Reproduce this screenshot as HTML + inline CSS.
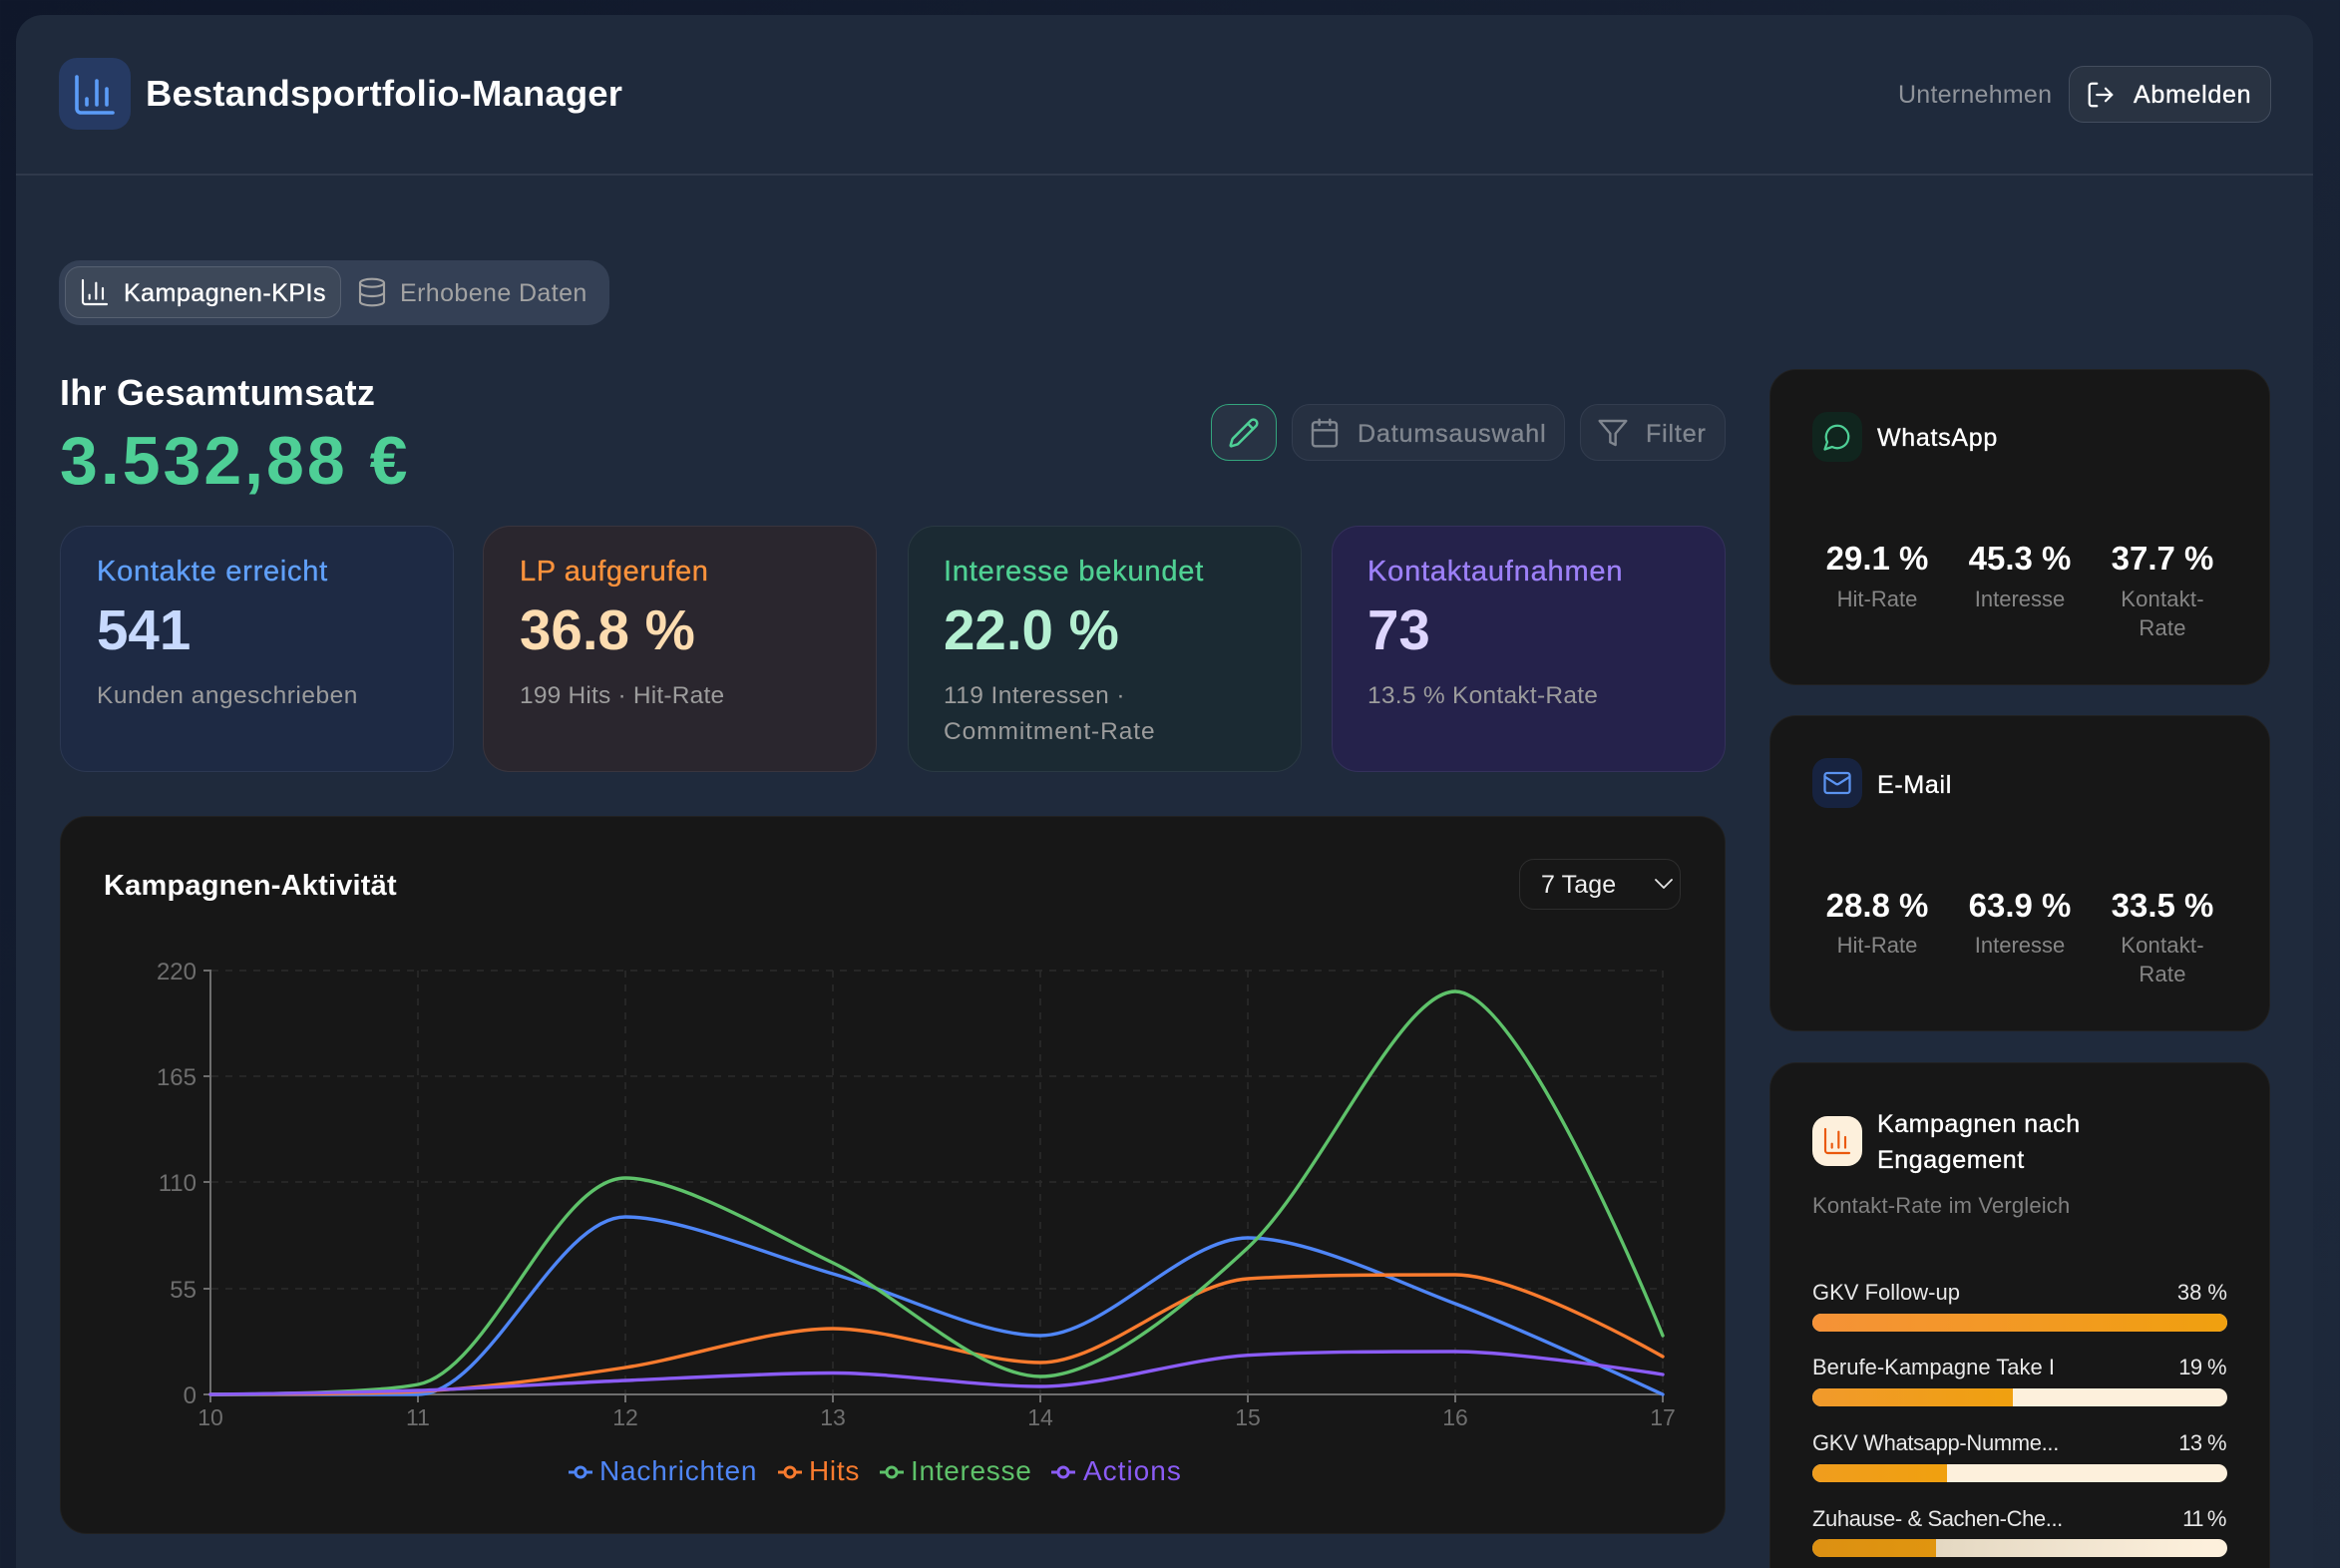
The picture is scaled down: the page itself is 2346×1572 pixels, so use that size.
<!DOCTYPE html>
<html lang="de">
<head>
<meta charset="utf-8">
<title>Bestandsportfolio-Manager</title>
<style>
html,body{margin:0;padding:0;width:2346px;height:1572px;overflow:hidden}
body{position:relative;background:linear-gradient(135deg,#0f172a 0%,#1e293b 100%);font-family:"Liberation Sans",sans-serif;color:#fff}
.a,.t{position:absolute;box-sizing:border-box}
.t{white-space:nowrap;line-height:1}
.m{-webkit-text-stroke:.35px currentColor}
.panel{left:16px;top:15px;width:2303px;height:1600px;background:#1f2a3c;border-radius:27px}
.hr{left:16px;top:174px;width:2303px;height:2px;background:#2f394b}
.kpi{top:527px;width:395px;height:247px;border-radius:27px;border:1.5px solid}
.kl{top:559px;font-size:29px}
.kv{top:604px;font-size:56.5px;font-weight:700}
.ks{font-size:24.5px;color:#9c9c9c;letter-spacing:.42px}
.dark{background:#171717;border:1.5px solid #212121;border-radius:27px}
.btn{top:405px;height:57px;border-radius:18px;background:#263041;border:1.5px solid #333d4f}
.bt{top:423px;font-size:25px;color:#80868f}
.val{font-size:33px;font-weight:700;text-align:center;width:140px}
.lab{font-size:22px;color:#868686;text-align:center;width:140px;line-height:29px;white-space:normal}
.bl{font-size:22px;color:#e8e8e8}
.pc{font-size:22px;color:#e8e8e8;right:113px}
.track{left:1817px;width:416px;height:18px;border-radius:9px;background:#fdf0dc;overflow:hidden}
.fill{position:absolute;left:0;top:0;height:18px;background:linear-gradient(90deg,#f59238,#f0a00f)}
svg.i{position:absolute;fill:none;stroke-linecap:round;stroke-linejoin:round}
</style>
</head>
<body>
<div class="a panel"></div>
<div class="a hr"></div>

<!-- header -->
<div class="a" style="left:59px;top:58px;width:72px;height:72px;border-radius:18px;background:#263a63"></div>
<svg class="i" style="left:71px;top:71px" width="48" height="48" viewBox="0 0 24 24" stroke="#5b9cf8" stroke-width="1.8"><path d="M3 3v16a2 2 0 0 0 2 2h16"/><path d="M18 17V9"/><path d="M13 17V5"/><path d="M8 17v-3"/></svg>
<div class="t" style="left:146px;top:76px;font-size:36.5px;font-weight:700;letter-spacing:.14px">Bestandsportfolio-Manager</div>
<div class="t" style="left:1903px;top:83px;font-size:25px;color:#8f939a;letter-spacing:.25px">Unternehmen</div>
<div class="a" style="left:2074px;top:66px;width:203px;height:57px;border-radius:15px;background:#293342;border:1.5px solid #434d5e"></div>
<svg class="i" style="left:2091px;top:80px" width="30" height="30" viewBox="0 0 24 24" stroke="#fff" stroke-width="1.8"><path d="M9 21H5a2 2 0 0 1-2-2V5a2 2 0 0 1 2-2h4"/><path d="m16 17 5-5-5-5"/><path d="M21 12H9"/></svg>
<div class="t m" style="left:2139px;top:83px;font-size:25px;letter-spacing:.7px">Abmelden</div>

<!-- tabs -->
<div class="a" style="left:59px;top:261px;width:552px;height:65px;border-radius:21px;background:#344055"></div>
<div class="a" style="left:65px;top:267px;width:277px;height:52px;border-radius:15px;background:#3d4859;border:1.5px solid #566071"></div>
<svg class="i" style="left:79px;top:277px" width="32" height="32" viewBox="0 0 24 24" stroke="#fff" stroke-width="1.6"><path d="M3 3v16a2 2 0 0 0 2 2h16"/><path d="M18 17V9"/><path d="M13 17V5"/><path d="M8 17v-3"/></svg>
<div class="t m" style="left:124px;top:282px;font-size:25px;letter-spacing:.5px">Kampagnen-KPIs</div>
<svg class="i" style="left:357px;top:277px" width="32" height="32" viewBox="0 0 24 24" stroke="#a3a3a3" stroke-width="1.6"><ellipse cx="12" cy="5" rx="9" ry="3"/><path d="M3 5V19A9 3 0 0 0 21 19V5"/><path d="M3 12A9 3 0 0 0 21 12"/></svg>
<div class="t" style="left:401px;top:282px;font-size:25px;color:#a3a3a3;letter-spacing:.4px">Erhobene Daten</div>

<!-- revenue -->
<div class="t" style="left:60px;top:376px;font-size:36px;font-weight:700;letter-spacing:.25px">Ihr Gesamtumsatz</div>
<div class="t" style="left:60px;top:428px;font-size:68px;font-weight:700;letter-spacing:3px;color:#4ecf96">3.532,88 €</div>

<!-- action buttons -->
<div class="a btn" style="left:1214px;width:66px;background:#283344;border-color:#34a57d"></div>
<svg class="i" style="left:1231px;top:418px" width="32" height="32" viewBox="0 0 24 24" stroke="#4ecf96" stroke-width="1.9"><path d="M21.174 6.812a1 1 0 0 0-3.986-3.987L3.842 16.174a2 2 0 0 0-.5.83l-1.321 4.352a.5.5 0 0 0 .623.622l4.353-1.32a2 2 0 0 0 .83-.497z"/><path d="m15 5 4 4"/></svg>
<div class="a btn" style="left:1295px;width:274px"></div>
<svg class="i" style="left:1312px;top:418px" width="32" height="32" viewBox="0 0 24 24" stroke="#80868f" stroke-width="1.8"><path d="M8 2v4"/><path d="M16 2v4"/><rect x="3" y="4" width="18" height="18" rx="2"/><path d="M3 10h18"/></svg>
<div class="t bt m" style="left:1361px;letter-spacing:.9px">Datumsauswahl</div>
<div class="a btn" style="left:1584px;width:146px"></div>
<svg class="i" style="left:1601px;top:418px" width="32" height="32" viewBox="0 0 24 24" stroke="#80868f" stroke-width="1.8"><polygon points="22 3 2 3 10 12.46 10 19 14 21 14 12.46 22 3"/></svg>
<div class="t bt m" style="left:1650px;letter-spacing:.85px">Filter</div>

<!-- KPI cards -->
<div class="a kpi" style="left:60px;background:#1e2a44;border-color:#2c3852"></div>
<div class="t kl m" style="left:97px;color:#60a0fa;letter-spacing:.75px">Kontakte erreicht</div>
<div class="t kv" style="left:97px;color:#c7d9fe">541</div>
<div class="t ks" style="left:97px;top:686px;letter-spacing:.49px">Kunden angeschrieben</div>

<div class="a kpi" style="left:484px;background:#2a262e;border-color:#39353e"></div>
<div class="t kl m" style="left:521px;color:#fb923c;letter-spacing:.6px">LP aufgerufen</div>
<div class="t kv" style="left:521px;color:#fddcb0">36.8 %</div>
<div class="t ks" style="left:521px;top:686px;letter-spacing:.2px">199 Hits · Hit-Rate</div>

<div class="a kpi" style="left:910px;background:#1b2a33;border-color:#2a3943"></div>
<div class="t kl m" style="left:946px;color:#4fd193;letter-spacing:.8px">Interesse bekundet</div>
<div class="t kv" style="left:946px;color:#b5f0d2">22.0 %</div>
<div class="t ks" style="left:946px;top:686px">119 Interessen ·</div>
<div class="t ks" style="left:946px;top:722px;letter-spacing:.92px">Commitment-Rate</div>

<div class="a kpi" style="left:1335px;background:#25224b;border-color:#34315b"></div>
<div class="t kl m" style="left:1371px;color:#9d80f8;letter-spacing:.8px">Kontaktaufnahmen</div>
<div class="t kv" style="left:1371px;color:#ded6fe">73</div>
<div class="t ks" style="left:1371px;top:686px;letter-spacing:.27px">13.5 % Kontakt-Rate</div>

<!-- chart card -->
<div class="a dark" style="left:60px;top:818px;width:1670px;height:720px"></div>
<div class="t" style="left:104px;top:874px;font-size:29px;font-weight:700;letter-spacing:.2px">Kampagnen-Aktivität</div>
<div class="a" style="left:1523px;top:861px;width:162px;height:51px;border-radius:15px;border:1.5px solid #2e2e2e"></div>
<div class="t" style="left:1545px;top:875px;font-size:25px;color:#f0f0f0;letter-spacing:.1px">7 Tage</div>
<svg class="i" style="left:1656px;top:876px" width="24" height="22" viewBox="0 0 24 22" stroke="#e5e5e5" stroke-width="1.8"><path d="M4 6l8 8 8-8"/></svg>

<svg class="a" style="left:0;top:0" width="2346" height="1572" viewBox="0 0 2346 1572" fill="none">
  <g stroke="#2b2b2b" stroke-width="1.5" stroke-dasharray="7 7">
    <path d="M212 973H1667M212 1079H1667M212 1185H1667M212 1292H1667"/>
    <path d="M419 973V1398M627 973V1398M835 973V1398M1043 973V1398M1251 973V1398M1459 973V1398M1667 973V1398"/>
  </g>
  <g stroke="#6e6e6e" stroke-width="2">
    <path d="M211 972V1398M204 973H211M204 1079H211M204 1185H211M204 1292H211M204 1398H211"/>
    <path d="M204 1398H1667M211 1398v8M419 1398v8M627 1398v8M835 1398v8M1043 1398v8M1251 1398v8M1459 1398v8M1667 1398v8"/>
  </g>
  <g font-family="'Liberation Sans',sans-serif" font-size="24" fill="#6e6e6e" text-anchor="end">
    <text x="197" y="982">220</text><text x="197" y="1088">165</text><text x="197" y="1194">110</text><text x="197" y="1301">55</text><text x="197" y="1407">0</text>
  </g>
  <g font-family="'Liberation Sans',sans-serif" font-size="23" fill="#6e6e6e" text-anchor="middle">
    <text x="211" y="1429">10</text><text x="419" y="1429">11</text><text x="627" y="1429">12</text><text x="835" y="1429">13</text><text x="1043" y="1429">14</text><text x="1251" y="1429">15</text><text x="1459" y="1429">16</text><text x="1667" y="1429">17</text>
  </g>
  <g stroke-width="3.4" stroke-linecap="round" stroke-linejoin="round">
    <path stroke="#4f86f7" d="M211,1398C211,1398 365.1,1398 419,1398C489.9,1398 557.2,1220 627,1220C682,1220 772.8,1259.2 835,1277C897.6,1294.9 982.4,1339 1043,1339C1107.2,1339 1187,1241 1251,1241C1311.8,1241 1397.8,1283.9 1459,1307C1522.7,1331 1667,1398 1667,1398"/>
    <path stroke="#f97b2e" d="M211,1398C211,1398 356.8,1398 419,1395C481.6,1392 565,1380.4 627,1371C689.7,1361.5 772.5,1332 835,1332C897.3,1332 982.5,1366 1043,1366C1107.3,1366 1186.3,1286.3 1251,1282C1311,1278 1398.8,1278 1459,1278C1523.7,1278 1667,1360 1667,1360"/>
    <path stroke="#5ec26a" d="M211,1398C211,1398 367.2,1398 419,1388C492,1373.9 556.3,1181 627,1181C681.1,1181 774.3,1236.9 835,1266C899.1,1296.7 981.6,1380 1043,1380C1106.4,1380 1197.9,1300.2 1251,1251C1322.7,1184.5 1402.7,994 1459,994C1527.6,994 1667,1339 1667,1339"/>
    <path stroke="#8b5cf6" d="M211,1398C211,1398 356.6,1396.1 419,1394C481.4,1391.9 564.6,1386.6 627,1384C689.4,1381.4 772.6,1376.5 835,1376.5C897.4,1376.5 980.9,1390 1043,1390C1105.7,1390 1188.3,1362.4 1251,1358.7C1313,1355 1397,1355 1459,1355C1521.4,1355 1667,1378 1667,1378"/>
  </g>
  <g stroke-width="3">
    <path stroke="#4f86f7" d="M570 1476H594"/><circle cx="582" cy="1476" r="5" stroke="#4f86f7" fill="#171717"/>
    <path stroke="#f97b2e" d="M780 1476H804"/><circle cx="792" cy="1476" r="5" stroke="#f97b2e" fill="#171717"/>
    <path stroke="#5ec26a" d="M882 1476H906"/><circle cx="894" cy="1476" r="5" stroke="#5ec26a" fill="#171717"/>
    <path stroke="#8b5cf6" d="M1054 1476H1078"/><circle cx="1066" cy="1476" r="5" stroke="#8b5cf6" fill="#171717"/>
  </g>
</svg>
<div class="t" style="left:601px;top:1461px;font-size:28px;color:#4f86f7;letter-spacing:.8px">Nachrichten</div>
<div class="t" style="left:811px;top:1461px;font-size:28px;color:#f97b2e;letter-spacing:.7px">Hits</div>
<div class="t" style="left:913px;top:1461px;font-size:28px;color:#5ec26a;letter-spacing:.7px">Interesse</div>
<div class="t" style="left:1086px;top:1461px;font-size:28px;color:#8b5cf6;letter-spacing:1px">Actions</div>

<!-- WhatsApp -->
<div class="a dark" style="left:1774px;top:370px;width:502px;height:317px"></div>
<div class="a" style="left:1817px;top:413px;width:50px;height:50px;border-radius:15px;background:#10251e"></div>
<svg class="i" style="left:1827px;top:423px" width="30" height="30" viewBox="0 0 24 24" stroke="#4ecf96" stroke-width="1.8"><path d="M7.9 20A9 9 0 1 0 4 16.1L2 22Z"/></svg>
<div class="t m" style="left:1882px;top:427px;font-size:25px;letter-spacing:.7px">WhatsApp</div>
<div class="t val" style="left:1812px;top:543px">29.1 %</div>
<div class="t val" style="left:1955px;top:543px">45.3 %</div>
<div class="t val" style="left:2098px;top:543px">37.7 %</div>
<div class="t lab" style="left:1812px;top:586px">Hit-Rate</div>
<div class="t lab" style="left:1955px;top:586px">Interesse</div>
<div class="t lab" style="left:2098px;top:586px;letter-spacing:.2px">Kontakt-<br>Rate</div>

<!-- E-Mail -->
<div class="a dark" style="left:1774px;top:717px;width:502px;height:317px"></div>
<div class="a" style="left:1817px;top:760px;width:50px;height:50px;border-radius:15px;background:#172340"></div>
<svg class="i" style="left:1827px;top:770px" width="30" height="30" viewBox="0 0 24 24" stroke="#5b93f0" stroke-width="1.8"><rect x="2" y="4" width="20" height="16" rx="2"/><path d="m22 7-8.97 5.7a1.94 1.94 0 0 1-2.06 0L2 7"/></svg>
<div class="t m" style="left:1882px;top:775px;font-size:25px;letter-spacing:.7px">E-Mail</div>
<div class="t val" style="left:1812px;top:891px">28.8 %</div>
<div class="t val" style="left:1955px;top:891px">63.9 %</div>
<div class="t val" style="left:2098px;top:891px">33.5 %</div>
<div class="t lab" style="left:1812px;top:933px">Hit-Rate</div>
<div class="t lab" style="left:1955px;top:933px">Interesse</div>
<div class="t lab" style="left:2098px;top:933px;letter-spacing:.2px">Kontakt-<br>Rate</div>

<!-- Engagement -->
<div class="a dark" style="left:1774px;top:1065px;width:502px;height:560px"></div>
<div class="a" style="left:1817px;top:1119px;width:50px;height:50px;border-radius:15px;background:#fdf0dc"></div>
<svg class="i" style="left:1826px;top:1128px" width="32" height="32" viewBox="0 0 24 24" stroke="#ea580c" stroke-width="1.6"><path d="M3 3v16a2 2 0 0 0 2 2h16"/><path d="M18 17V9"/><path d="M13 17V5"/><path d="M8 17v-3"/></svg>
<div class="t m" style="left:1882px;top:1115px;font-size:25px;letter-spacing:.55px">Kampagnen nach</div>
<div class="t m" style="left:1882px;top:1151px;font-size:25px;letter-spacing:.6px">Engagement</div>
<div class="t" style="left:1817px;top:1198px;font-size:22px;color:#808080;letter-spacing:.16px">Kontakt-Rate im Vergleich</div>

<div class="t bl" style="left:1817px;top:1285px">GKV Follow-up</div>
<div class="t pc" style="top:1285px">38 %</div>
<div class="a track" style="top:1317px"><div class="fill" style="width:100%"></div></div>

<div class="t bl" style="left:1817px;top:1360px">Berufe-Kampagne Take I</div>
<div class="t pc" style="top:1360px;right:114px;letter-spacing:-.6px">19 %</div>
<div class="a track" style="top:1392px"><div class="fill" style="width:201px;background:linear-gradient(90deg,#f19a2c,#f0a00f)"></div></div>

<div class="t bl" style="left:1817px;top:1436px;letter-spacing:-.35px">GKV Whatsapp-Numme...</div>
<div class="t pc" style="top:1436px;right:114px;letter-spacing:-.6px">13 %</div>
<div class="a track" style="top:1468px"><div class="fill" style="width:135px;background:linear-gradient(90deg,#f09d1e,#f0a00f)"></div></div>

<div class="t bl" style="left:1817px;top:1512px;letter-spacing:-.4px">Zuhause- &amp; Sachen-Che...</div>
<div class="t pc" style="top:1512px;right:115px;letter-spacing:-1.4px">11 %</div>
<div class="a track" style="top:1543px;background:linear-gradient(95deg,#e4d8c2 30%,#fdf0dc 95%)"><div class="fill" style="width:124px;background:linear-gradient(90deg,#dc9012,#e0950f)"></div></div>
</body>
</html>
